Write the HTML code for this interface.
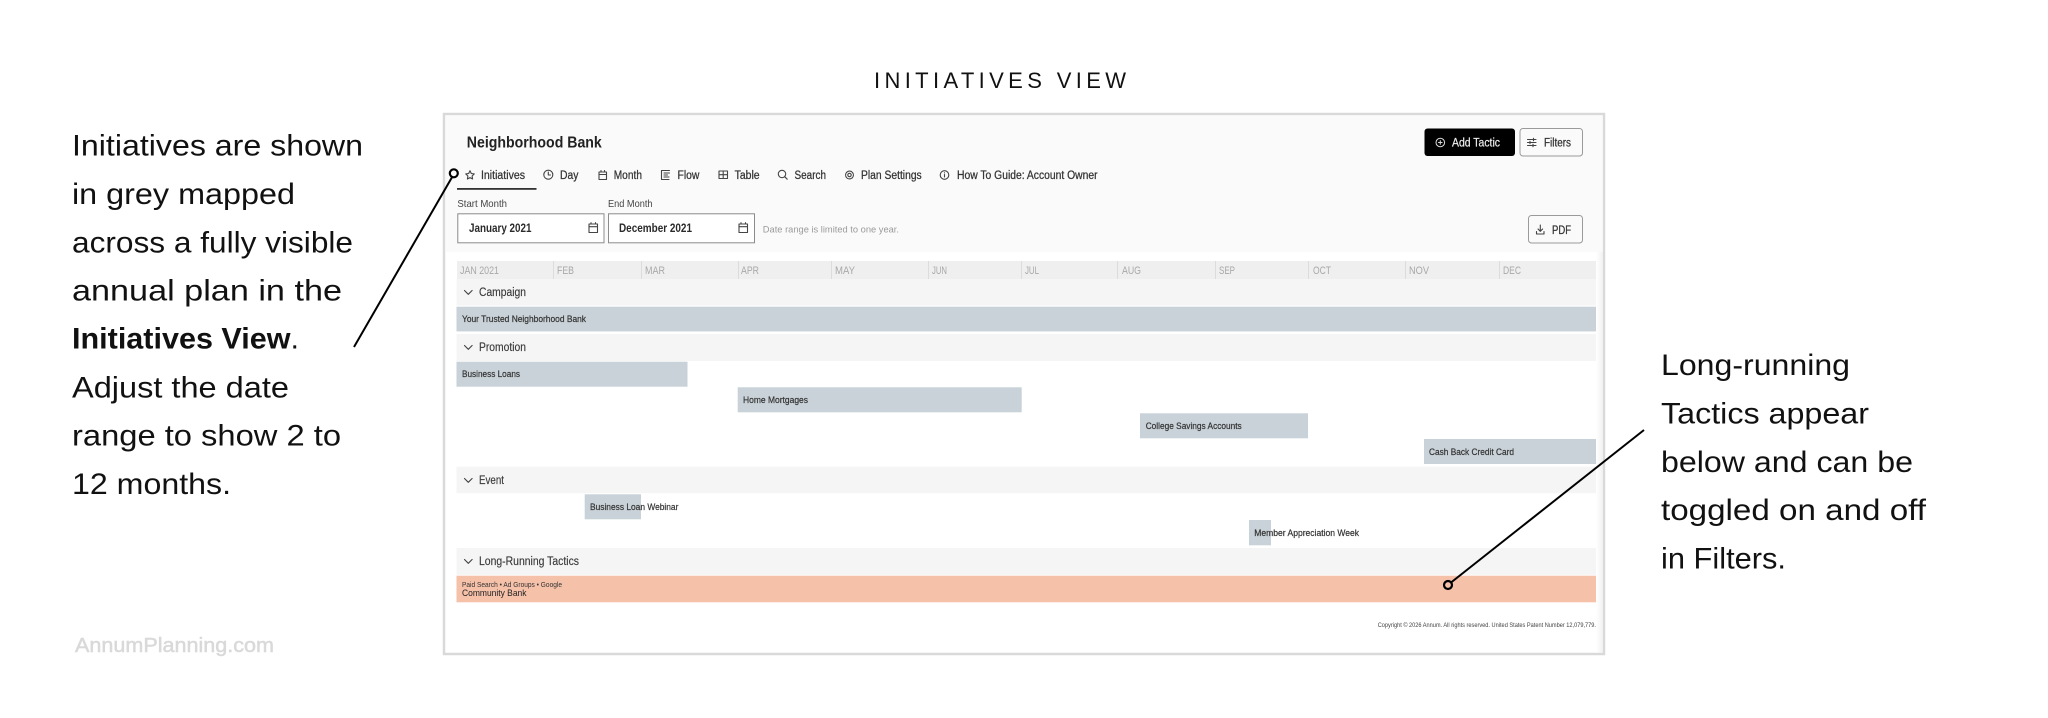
<!DOCTYPE html>
<html lang="en">
<head>
<meta charset="utf-8">
<title>Initiatives View</title>
<style>
html,body{margin:0;padding:0;background:#fff;width:2048px;height:718px;overflow:hidden}
svg{display:block}
text{font-family:"Liberation Sans",sans-serif;fill:#2e2e2e}
.big{font-size:30px;fill:#111}
.tab{font-size:11.5px;fill:#333;stroke:#333;stroke-width:.25px}
.grp{font-size:11.5px;fill:#3a3a3a;stroke:#3a3a3a;stroke-width:.15px}
.bar{font-size:9px;fill:#333;stroke:#333;stroke-width:.2px}
.mon{font-size:11px;fill:#a8a8a8}
.ic{fill:none;stroke:#444;stroke-width:1.1;stroke-linecap:round;stroke-linejoin:round}
</style>
</head>
<body>
<svg width="2048" height="718" viewBox="0 0 2048 718" xmlns="http://www.w3.org/2000/svg">
<defs>
<linearGradient id="sh" x1="0" x2="1" y1="0" y2="0"><stop offset="0" stop-color="#fff"/><stop offset="1" stop-color="#f1f1f1"/></linearGradient>
</defs>
<rect width="2048" height="718" fill="#fff"/>

<!-- Heading -->
<text x="874" y="88" font-size="22" textLength="252" lengthAdjust="spacing" style="fill:#111">INITIATIVES VIEW</text>

<!-- Left copy -->
<text class="big" x="72" y="155.500" textLength="291" lengthAdjust="spacingAndGlyphs">Initiatives are shown</text>
<text class="big" x="72" y="203.800" textLength="223" lengthAdjust="spacingAndGlyphs">in grey mapped</text>
<text class="big" x="72" y="252.300" textLength="281" lengthAdjust="spacingAndGlyphs">across a fully visible</text>
<text class="big" x="72" y="300.700" textLength="270" lengthAdjust="spacingAndGlyphs">annual plan in the</text>
<text class="big" x="72" y="348.700" textLength="227" lengthAdjust="spacingAndGlyphs"><tspan font-weight="700">Initiatives View</tspan>.</text>
<text class="big" x="72" y="397.300" textLength="217" lengthAdjust="spacingAndGlyphs">Adjust the date</text>
<text class="big" x="72" y="445.500" textLength="269" lengthAdjust="spacingAndGlyphs">range to show 2 to</text>
<text class="big" x="72" y="494" textLength="159" lengthAdjust="spacingAndGlyphs">12 months.</text>

<text x="75" y="652" font-size="20" textLength="199" lengthAdjust="spacingAndGlyphs" style="fill:#d9d9d9;stroke:#d9d9d9;stroke-width:.5px">AnnumPlanning.com</text>

<!-- Right copy -->
<text class="big" x="1661" y="375" textLength="189" lengthAdjust="spacingAndGlyphs">Long-running</text>
<text class="big" x="1661" y="423.700" textLength="208" lengthAdjust="spacingAndGlyphs">Tactics appear</text>
<text class="big" x="1661" y="472" textLength="252" lengthAdjust="spacingAndGlyphs">below and can be</text>
<text class="big" x="1661" y="520" textLength="265" lengthAdjust="spacingAndGlyphs">toggled on and off</text>
<text class="big" x="1661" y="568.500" textLength="125" lengthAdjust="spacingAndGlyphs">in Filters.</text>

<!-- Frame -->
<rect x="444" y="114" width="1160" height="540" fill="#fff" stroke="#d9d9d9" stroke-width="2.500"/>
<rect x="445.300" y="115.300" width="1157.400" height="136.700" fill="#fafafa"/>
<rect x="1596" y="252" width="6.700" height="400.700" fill="url(#sh)"/>

<!-- Header -->
<text x="466.800" y="147.500" font-size="16" font-weight="700" textLength="135" lengthAdjust="spacingAndGlyphs" style="fill:#222">Neighborhood Bank</text>

<rect x="1424.500" y="128.500" width="90.500" height="27.500" rx="3" fill="#000"/>
<g fill="none" stroke="#ddd" stroke-width="1"><circle cx="1440.300" cy="142.500" r="4.300"/><path d="M1440.300 140.300v4.400M1438.100 142.500h4.400"/></g>
<text x="1452" y="146.500" font-size="11.500" textLength="48" lengthAdjust="spacingAndGlyphs" style="fill:#eee;stroke:#eee;stroke-width:.2px">Add Tactic</text>

<rect x="1520" y="128.500" width="62.500" height="27.500" rx="3" fill="#fafafa" stroke="#9a9a9a" stroke-width="1"/>
<path class="ic" d="M1527.500 139.500h8.500M1527.500 142.500h8.500M1527.500 145.500h8.500M1533.500 138.300v2.400M1530 141.300v2.400M1533 144.300v2.400"/>
<text class="tab" x="1544" y="146.500" textLength="27" lengthAdjust="spacingAndGlyphs">Filters</text>

<rect x="1528.500" y="215.500" width="54" height="27.500" rx="3" fill="#fafafa" stroke="#9a9a9a" stroke-width="1"/>
<path class="ic" d="M1540.300 225v6M1538 229l2.300 2.300 2.300-2.300M1536.500 231.500v2.500h7.500v-2.500"/>
<text class="tab" x="1552" y="234" textLength="19" lengthAdjust="spacingAndGlyphs">PDF</text>

<!-- Tabs -->
<path class="ic" d="M470 170.700l1.300 2.800 3 .4-2.200 2.100.5 3-2.600-1.400-2.600 1.400.5-3-2.200-2.100 3-.4z"/>
<text class="tab" x="481" y="179" textLength="44" lengthAdjust="spacingAndGlyphs">Initiatives</text>
<rect x="457" y="188" width="79.500" height="1.800" fill="#333"/>

<circle class="ic" cx="548.300" cy="174.700" r="4.500"/><path class="ic" d="M548.300 172v3h2.200"/>
<text class="tab" x="560" y="179" textLength="18.400" lengthAdjust="spacingAndGlyphs">Day</text>

<path class="ic" d="M599 172h7.500v7.500h-7.500zM599 174.500h7.500M601 170.500v1.500M604.500 170.500v1.500"/>
<text class="tab" x="613.700" y="179" textLength="28.300" lengthAdjust="spacingAndGlyphs">Month</text>

<path class="ic" d="M661.500 170.500v9h7.500M661.500 170.500h8M664 173h5.500M664 175h3.500M664 177h5"/>
<text class="tab" x="677.500" y="179" textLength="21.900" lengthAdjust="spacingAndGlyphs">Flow</text>

<path class="ic" d="M719 171h8.500v7.500h-8.500zM719 174.700h8.500M723.200 171v7.500"/>
<text class="tab" x="734.600" y="179" textLength="25" lengthAdjust="spacingAndGlyphs">Table</text>

<circle class="ic" cx="782" cy="174" r="3.700"/><path class="ic" d="M784.700 176.700l2.500 2.500"/>
<text class="tab" x="794.500" y="179" textLength="31.500" lengthAdjust="spacingAndGlyphs">Search</text>

<circle class="ic" cx="849.500" cy="175" r="1.700"/><circle class="ic" cx="849.500" cy="175" r="3.900" stroke-dasharray="1.600 .8" stroke-width="1.400"/>
<text class="tab" x="861" y="179" textLength="60.700" lengthAdjust="spacingAndGlyphs">Plan Settings</text>

<circle class="ic" cx="944.500" cy="175" r="4.300"/><path class="ic" d="M944.500 174.500v2.500M944.500 172.800v.2"/>
<text class="tab" x="957" y="179" textLength="140.600" lengthAdjust="spacingAndGlyphs">How To Guide: Account Owner</text>

<!-- Date range -->
<text x="457.400" y="207" font-size="10.500" textLength="49.600" lengthAdjust="spacingAndGlyphs" style="fill:#444">Start Month</text>
<text x="608" y="207" font-size="10.500" textLength="44.500" lengthAdjust="spacingAndGlyphs" style="fill:#444">End Month</text>

<rect x="457.800" y="213.800" width="146.200" height="29" fill="#fff" stroke="#8c8c8c" stroke-width="1"/>
<text x="469" y="232" font-size="11.500" font-weight="700" textLength="62.500" lengthAdjust="spacingAndGlyphs" style="fill:#2a2a2a">January 2021</text>
<path class="ic" d="M589 224h8.500v8.500h-8.500zM589 226.700h8.500M591 222.700v1.300M595.500 222.700v1.300"/>

<rect x="608.500" y="213.800" width="146" height="29" fill="#fff" stroke="#8c8c8c" stroke-width="1"/>
<text x="619" y="232" font-size="11.500" font-weight="700" textLength="73" lengthAdjust="spacingAndGlyphs" style="fill:#2a2a2a">December 2021</text>
<path class="ic" d="M739 224h8.500v8.500h-8.500zM739 226.700h8.500M741 222.700v1.300M745.500 222.700v1.300"/>

<text x="762.800" y="232.500" font-size="9.500" textLength="136.200" lengthAdjust="spacingAndGlyphs" style="fill:#9a9a9a">Date range is limited to one year.</text>

<!-- Month header -->
<rect x="457" y="261" width="1139" height="18" fill="#efefef"/>
<g fill="#dcdcdc">
<rect x="553" y="261" width="1" height="18"/><rect x="641" y="261" width="1" height="18"/><rect x="738" y="261" width="1" height="18"/><rect x="831" y="261" width="1" height="18"/><rect x="928" y="261" width="1" height="18"/><rect x="1021" y="261" width="1" height="18"/><rect x="1117" y="261" width="1" height="18"/><rect x="1215" y="261" width="1" height="18"/><rect x="1308" y="261" width="1" height="18"/><rect x="1405" y="261" width="1" height="18"/><rect x="1499" y="261" width="1" height="18"/>
</g>
<text class="mon" x="460" y="274" textLength="39" lengthAdjust="spacingAndGlyphs">JAN 2021</text>
<text class="mon" x="557" y="274" textLength="17" lengthAdjust="spacingAndGlyphs">FEB</text>
<text class="mon" x="645" y="274" textLength="20" lengthAdjust="spacingAndGlyphs">MAR</text>
<text class="mon" x="741" y="274" textLength="18" lengthAdjust="spacingAndGlyphs">APR</text>
<text class="mon" x="835" y="274" textLength="20" lengthAdjust="spacingAndGlyphs">MAY</text>
<text class="mon" x="932" y="274" textLength="15" lengthAdjust="spacingAndGlyphs">JUN</text>
<text class="mon" x="1025" y="274" textLength="14" lengthAdjust="spacingAndGlyphs">JUL</text>
<text class="mon" x="1122" y="274" textLength="19" lengthAdjust="spacingAndGlyphs">AUG</text>
<text class="mon" x="1219" y="274" textLength="16" lengthAdjust="spacingAndGlyphs">SEP</text>
<text class="mon" x="1313" y="274" textLength="18" lengthAdjust="spacingAndGlyphs">OCT</text>
<text class="mon" x="1409" y="274" textLength="20" lengthAdjust="spacingAndGlyphs">NOV</text>
<text class="mon" x="1503" y="274" textLength="18" lengthAdjust="spacingAndGlyphs">DEC</text>

<!-- Group rows -->
<g fill="#f5f5f5">
<rect x="456.500" y="279" width="1139.500" height="26.500"/>
<rect x="456.500" y="334" width="1139.500" height="27"/>
<rect x="456.500" y="466.700" width="1139.500" height="26.500"/>
<rect x="456.500" y="548" width="1139.500" height="26.800"/>
</g>
<path class="ic" d="M464.500 290.500l3.800 3.800 3.800-3.800M464.500 345.500l3.800 3.800 3.800-3.800M464.500 478.500l3.800 3.800 3.800-3.800M464.500 559.500l3.800 3.800 3.800-3.800"/>
<text class="grp" x="479" y="296" textLength="47" lengthAdjust="spacingAndGlyphs">Campaign</text>
<text class="grp" x="479" y="351.200" textLength="47" lengthAdjust="spacingAndGlyphs">Promotion</text>
<text class="grp" x="479" y="484" textLength="25" lengthAdjust="spacingAndGlyphs">Event</text>
<text class="grp" x="479" y="565" textLength="100" lengthAdjust="spacingAndGlyphs">Long-Running Tactics</text>

<!-- Bars -->
<g fill="#c9d2d8">
<rect x="456.500" y="306.700" width="1139.500" height="24.700"/>
<rect x="456.500" y="361.700" width="231" height="25"/>
<rect x="737.700" y="387.300" width="284" height="25"/>
<rect x="1140" y="413.300" width="168" height="25"/>
<rect x="1424" y="439" width="172" height="25"/>
<rect x="584.700" y="494.300" width="56.300" height="25"/>
<rect x="1249" y="520" width="22" height="25.300"/>
</g>
<text class="bar" x="462" y="322.200" textLength="124" lengthAdjust="spacingAndGlyphs">Your Trusted Neighborhood Bank</text>
<text class="bar" x="462" y="377.200" textLength="58" lengthAdjust="spacingAndGlyphs">Business Loans</text>
<text class="bar" x="743" y="403" textLength="65" lengthAdjust="spacingAndGlyphs">Home Mortgages</text>
<text class="bar" x="1145.700" y="429.200" textLength="96" lengthAdjust="spacingAndGlyphs">College Savings Accounts</text>
<text class="bar" x="1429" y="455" textLength="85" lengthAdjust="spacingAndGlyphs">Cash Back Credit Card</text>
<text class="bar" x="590" y="510" textLength="88.400" lengthAdjust="spacingAndGlyphs">Business Loan Webinar</text>
<text class="bar" x="1254.300" y="536" textLength="104.700" lengthAdjust="spacingAndGlyphs">Member Appreciation Week</text>

<rect x="456.500" y="575.700" width="1139.500" height="26.600" fill="#f6c1a9"/>
<text x="462" y="587" font-size="7" textLength="100" lengthAdjust="spacingAndGlyphs" style="fill:#333">Paid Search • Ad Groups • Google</text>
<text x="462" y="596.200" font-size="9.500" textLength="64.500" lengthAdjust="spacingAndGlyphs" style="fill:#222">Community Bank</text>

<text x="1377.700" y="627" font-size="6" textLength="218.300" lengthAdjust="spacingAndGlyphs" style="fill:#444">Copyright © 2026 Annum. All rights reserved. United States Patent Number 12,079,779.</text>

<!-- Callouts -->
<path d="M452 177.200L354 347" fill="none" stroke="#000" stroke-width="2"/>
<circle cx="453.800" cy="173.300" r="4" fill="none" stroke="#000" stroke-width="2.200"/>
<path d="M1451 582.500L1644 430" fill="none" stroke="#000" stroke-width="2"/>
<circle cx="1448" cy="585" r="4" fill="none" stroke="#000" stroke-width="2.200"/>
</svg>
</body>
</html>
